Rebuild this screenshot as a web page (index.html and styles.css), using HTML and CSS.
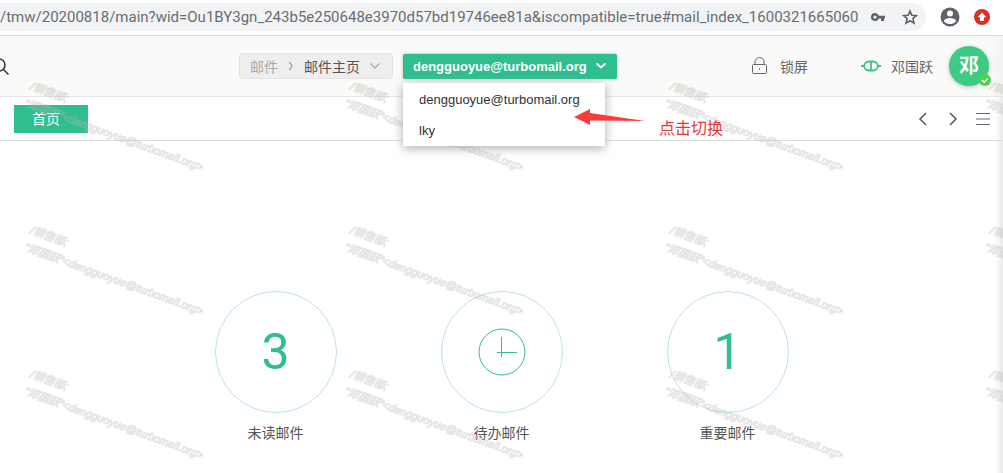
FILE: index.html
```html
<!DOCTYPE html>
<html lang="zh-CN">
  <head>
    <meta charset="UTF-8" />
    <meta name="viewport" content="width=device-width, initial-scale=1.0" />
    <title>邮件主页</title>
    <link rel="stylesheet" href="styles.css">
  </head>
  <body>
    <!-- browser bar -->
    <div class="browser-bar">
      <div class="address">
        <input class="address-input" type="text" aria-label="Address" value="/tmw/20200818/main?wid=Ou1BY3gn_243b5e250648e3970d57bd19746ee81a&amp;iscompatible=true#mail_index_1600321665060">
        <button class="bar-button" aria-label="Passwords">
          <svg width="16" height="16" viewBox="0 0 16 16"><path fill="#5f6368" fill-rule="evenodd" d="M5 4a4 4 0 0 1 3.800 2.700H15V9.500H14V12H11V9.500H8.700A4 4 0 1 1 5 4zM5 6.500a1.600 1.600 0 1 0 0 3.200 1.600 1.600 0 0 0 0-3.200z"/></svg>
        </button>
        <button class="bar-button bookmark" aria-label="Bookmark">
          <svg width="16" height="16" viewBox="0 0 16 16"><path fill="none" stroke="#5f6368" stroke-width="1.600" d="M8 2l1.800 4.200 4.600.4-3.500 3 1.100 4.500L8 11.700l-4 2.400 1.100-4.500-3.500-3 4.600-.4z"/></svg>
        </button>
      </div>
      <button class="bar-button" aria-label="Profile">
        <svg width="20" height="20" viewBox="0 0 20 20"><circle cx="10" cy="10" r="9.500" fill="#5f6368"/><circle cx="10" cy="6.500" r="3" fill="#fff"/><path d="M4 14.200c0-2.200 3.500-3.300 6-3.300s6 1.100 6 3.300c-1.400 1.800-3.500 2.900-6 2.900s-4.600-1.100-6-2.900z" fill="#fff"/></svg>
      </button>
      <button class="bar-button" aria-label="Update">
        <svg width="16" height="16" viewBox="0 0 16 16"><circle cx="8" cy="8" r="8" fill="#d93025"/><path d="M8 3.500l4.300 4.700H10V12H6V8.200H3.700z" fill="#fff"/></svg>
      </button>
    </div>

    <div class="page">
      <header class="header">
        <button class="search" aria-label="搜索">
          <svg width="9" height="18" viewBox="0 0 9 18"><circle cx="-1" cy="8" r="6" fill="none" stroke="#333" stroke-width="1.500"/><path d="M3.500 12.500l5 5" stroke="#333" stroke-width="1.500"/></svg>
        </button>

        <nav class="crumbs">
          <a class="crumb-parent" href="#">邮件</a>
          <svg width="6" height="10" viewBox="0 0 6 10"><path d="M1.500 1l2.500 4-2.500 4" fill="none" stroke="#999" stroke-width="1.300"/></svg>
          <a class="crumb-current" href="#">邮件主页</a>
          <svg class="crumb-arrow" width="10" height="6" viewBox="0 0 10 6"><path d="M.5.500L5 5 9.500.500" fill="none" stroke="#aaa" stroke-width="1.300"/></svg>
        </nav>

        <div class="account">
          <button class="account-button">
            dengguoyue@turbomail.org
            <svg width="12" height="8" viewBox="0 0 12 8"><path d="M1.500 1.500L6 5.500l4.500-4" fill="none" stroke="#fff" stroke-width="1.800"/></svg>
          </button>
          <div class="account-menu">
            <a class="account-item" href="#">dengguoyue@turbomail.org</a>
            <a class="account-item" href="#">lky</a>
          </div>
          <div class="hint">
            <svg width="72" height="18" viewBox="0 0 72 18"><path d="M0 9L16 1V5L71 13 16 12.500V17z" fill="#fb3a3a"/></svg>
            <span class="hint-text">点击切换</span>
          </div>
        </div>

        <div class="user-area">
          <button class="lock">
            <svg width="16" height="18" viewBox="0 0 16 18"><g fill="none" stroke="#666"><rect x=".5" y="7.500" width="14" height="9" rx="1"/><path d="M3 7.500V5a4.500 4.500 0 0 1 9 0v2.500"/></g><rect x="7" y="11" width="1" height="2" fill="#888"/></svg>
            锁屏
          </button>
          <button class="user">
            <svg width="20" height="12" viewBox="0 0 20 12"><g fill="none" stroke="#3cc08a" stroke-width="1.800"><rect x="3.200" y="1.500" width="13.600" height="9" rx="4.500"/><path d="M10 2v8M0 6h3M17 6h3"/></g></svg>
            邓国跃
          </button>
          <div class="avatar">
            邓
            <svg class="avatar-badge" width="12" height="12" viewBox="0 0 12 12"><circle cx="6" cy="6" r="6" fill="#4fd048"/><path d="M3 6l2.200 2.200L9 4.500" fill="none" stroke="#fff" stroke-width="1.400"/></svg>
          </div>
        </div>
      </header>

      <div class="tabs">
        <button class="tab">首页</button>
        <div class="tab-tools">
          <button class="tool" aria-label="上一个"><svg width="14" height="14" viewBox="0 0 14 14"><path d="M10 1L4 7l6 6" fill="none" stroke="#556" stroke-width="1.500"/></svg></button>
          <button class="tool" aria-label="下一个"><svg width="14" height="14" viewBox="0 0 14 14"><path d="M4 1l6 6-6 6" fill="none" stroke="#556" stroke-width="1.500"/></svg></button>
          <button class="tool" aria-label="菜单"><svg width="14" height="14" viewBox="0 0 14 14"><path d="M0 1.500h14M0 7h14M0 12.500h14" stroke="#667"/></svg></button>
        </div>
      </div>

      <main class="stats">
        <a class="stat" href="#">
          <span class="circle">3</span>
          <span>未读邮件</span>
        </a>
        <a class="stat" href="#">
          <span class="circle">
            <svg width="48" height="48" viewBox="0 0 48 48"><g fill="none" stroke="#2fbe8f"><circle cx="24" cy="24" r="23"/><path d="M23.500 9v20M19 24.500h20"/></g></svg>
          </span>
          <span>待办邮件</span>
        </a>
        <a class="stat" href="#">
          <span class="circle">1</span>
          <span>重要邮件</span>
        </a>
      </main>

      <!-- watermark tiles -->
      <div class="watermark" aria-hidden="true">
        <div class="mark">/销售部;<br>"邓国跃"&lt;dengguoyue@turbomail.org&gt;</div>
        <div class="mark">/销售部;<br>"邓国跃"&lt;dengguoyue@turbomail.org&gt;</div>
        <div class="mark">/销售部;<br>"邓国跃"&lt;dengguoyue@turbomail.org&gt;</div>
        <div class="mark">/销售部;<br>"邓国跃"&lt;dengguoyue@turbomail.org&gt;</div>
        <div class="mark">/销售部;<br>"邓国跃"&lt;dengguoyue@turbomail.org&gt;</div>
        <div class="mark">/销售部;<br>"邓国跃"&lt;dengguoyue@turbomail.org&gt;</div>
        <div class="mark">/销售部;<br>"邓国跃"&lt;dengguoyue@turbomail.org&gt;</div>
        <div class="mark">/销售部;<br>"邓国跃"&lt;dengguoyue@turbomail.org&gt;</div>
        <div class="mark">/销售部;<br>"邓国跃"&lt;dengguoyue@turbomail.org&gt;</div>
        <div class="mark">/销售部;<br>"邓国跃"&lt;dengguoyue@turbomail.org&gt;</div>
        <div class="mark">/销售部;<br>"邓国跃"&lt;dengguoyue@turbomail.org&gt;</div>
        <div class="mark">/销售部;<br>"邓国跃"&lt;dengguoyue@turbomail.org&gt;</div>
      </div>
    </div>
  </body>
</html>
```
FILE: styles.css
```css
* {
  box-sizing: border-box;
}
body {
  display: flex;
  flex-direction: column;
  min-height: 100vh;
  margin: 0;
  background-color: #fff;
  color: #555;
  font-family: "Liberation Sans", "Noto Sans CJK SC", sans-serif;
  font-size: 14px;
}
button {
  padding: 0;
  border: none;
  background: none;
  color: inherit;
  font: inherit;
  cursor: pointer;
}
a {
  color: inherit;
  text-decoration: none;
}
svg {
  display: block;
  flex: none;
}

/* browser bar */
.browser-bar {
  display: flex;
  align-items: center;
  gap: 14px;
  height: 36px;
  padding: 0 13px 2px 0;
  border-bottom: 1px solid #d9dcdc;
}
.address {
  display: flex;
  flex: 1;
  align-items: center;
  gap: 8px;
  height: 28px;
  padding-right: 8px;
  border-radius: 0 14px 14px 0;
  background-color: #f1f3f4;
}
.address-input {
  flex: 1;
  min-width: 0;
  padding: 0;
  border: none;
  background: none;
  color: #6a6d71;
  font-family: Roboto, sans-serif;
  font-size: 15px;
}
.bookmark {
  margin-left: 8px;
}

/* header */
.page {
  position: relative;
  flex: 1;
  overflow: hidden;
  box-shadow: inset -10px 0 10px -10px #ccc;
}
.header {
  display: flex;
  align-items: center;
  height: 61px;
  padding-right: 14px;
  border-bottom: 1px solid #e4e6e6;
  background: linear-gradient(to left, #f2f2f0, #fafaf8 14px);
}
.crumbs {
  display: flex;
  align-items: center;
  gap: 10px;
  height: 26px;
  margin-left: 230px;
  padding: 0 12px 0 10px;
  border: 1px solid #e4e4e4;
  border-radius: 4px;
  background-color: #eee;
}
.crumb-parent {
  color: #aaa;
}
.account {
  position: relative;
  z-index: 2;
  margin-left: 10px;
}
.account-button {
  display: flex;
  align-items: center;
  gap: 8px;
  height: 25px;
  padding: 0 10px;
  border-radius: 2px;
  background-color: #2fbe8f;
  box-shadow: 0 0 3px #aaa;
  color: #fff;
  font-size: 13px;
  font-weight: bold;
}
.account-menu {
  position: absolute;
  top: 29px;
  left: 0;
  width: 202px;
  padding-top: 1px;
  background-color: #fff;
  box-shadow: 0 2px 10px #aaa;
  color: #333;
  font-size: 13px;
}
.account-item {
  display: block;
  padding: 0 16px;
  line-height: 31px;
}
.hint {
  position: absolute;
  top: 54px;
  left: 171px;
  display: flex;
  gap: 13px;
  color: #e53935;
  font-size: 16px;
  line-height: 42px;
  white-space: nowrap;
}
.user-area {
  display: flex;
  align-items: center;
  margin-left: auto;
}
.lock,
.user {
  display: flex;
  align-items: center;
  gap: 12px;
  color: #666;
}
.user {
  gap: 10px;
  margin: 0 16px 0 53px;
}
.avatar {
  position: relative;
  width: 40px;
  height: 40px;
  border-radius: 50%;
  background-color: #3ccb84;
  box-shadow: 0 1px 4px #bbb;
  color: #fff;
  font-size: 20px;
  font-weight: bold;
  line-height: 40px;
  text-align: center;
}
.avatar-badge {
  position: absolute;
  right: -2px;
  bottom: 0;
}

/* tabs */
.tabs {
  display: flex;
  align-items: center;
  justify-content: space-between;
  height: 44px;
  padding: 0 13px 0 14px;
  border-bottom: 1px solid #dcdfdf;
}
.tab {
  height: 28px;
  padding: 0 28px 2px 18px;
  background-color: #2fbe8f;
  color: #fff;
}
.tab-tools {
  display: flex;
  gap: 16px;
}

/* mail counters */
.stats {
  display: flex;
  justify-content: center;
  padding-top: 150px;
}
.stat {
  display: flex;
  flex-direction: column;
  align-items: center;
  gap: 9px;
  width: 226px;
}
.circle {
  display: flex;
  align-items: center;
  justify-content: center;
  width: 122px;
  height: 122px;
  border: 1px solid #bce6d8;
  border-radius: 50%;
  color: #2fbe8f;
  font-family: Roboto, sans-serif;
  font-size: 50px;
}

/* watermark */
.watermark {
  position: absolute;
  top: 41px;
  left: 34px;
  z-index: 1;
  display: grid;
  grid-template-columns: repeat(4, 320px);
  grid-auto-rows: 144px;
  opacity: 0.35;
  pointer-events: none;
}
.mark {
  color: #b8b8b8;
  font-size: 11px;
  font-style: italic;
  line-height: 18px;
  white-space: nowrap;
  transform: rotate(20deg);
  transform-origin: 0 0;
  -webkit-text-stroke: 1px #b8b8b8;
}
```
